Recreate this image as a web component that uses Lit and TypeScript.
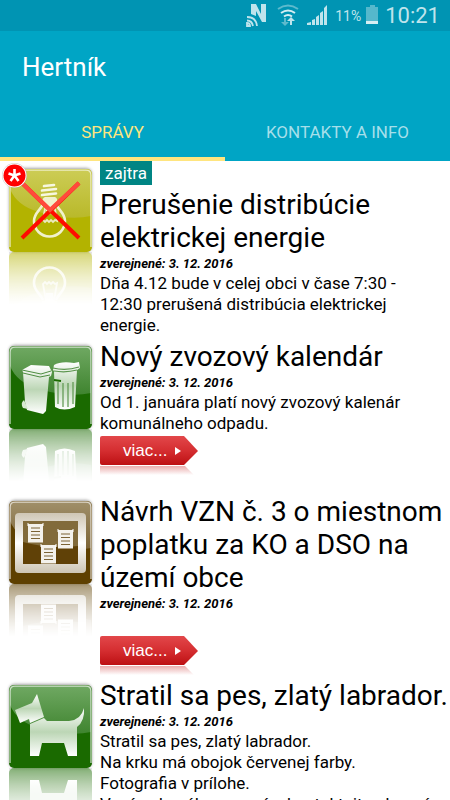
import { LitElement, html, svg, css, nothing } from "lit";
import { customElement, property, state } from "lit/decorators.js";

type Kind = "bulb" | "bins" | "board" | "dog";

interface Article {
  kind: Kind;
  title: string;
  text: string[];
  tag?: string;
  isNew?: boolean;
  more?: boolean;
}

const articles: Article[] = [
  {
    kind: "bulb",
    title: "Prerušenie distribúcie elektrickej energie",
    text: ["Dňa 4.12 bude v celej obci v čase 7:30 - 12:30 prerušená distribúcia elektrickej energie."],
    tag: "zajtra",
    isNew: true,
  },
  {
    kind: "bins",
    title: "Nový zvozový kalendár",
    text: ["Od 1. januára platí nový zvozový kalenár komunálneho odpadu."],
    more: true,
  },
  {
    kind: "board",
    title: "Návrh VZN č. 3 o miestnom poplatku za KO a DSO na území obce",
    text: ["\u00a0"],
    more: true,
  },
  {
    kind: "dog",
    title: "Stratil sa pes, zlatý labrador.",
    text: [
      "Stratil sa pes, zlatý labrador.",
      "Na krku má obojok červenej farby.",
      "Fotografia v prílohe.",
      "V prípade nálezu prosím kontaktujte obecný",
    ],
  },
];

const tones: Record<Kind, string[]> = {
  bulb: ["#cccc55", "#b3b300", "#b9b92a"],
  bins: ["#6fa862", "#1a6a00", "#3f842f"],
  board: ["#a08f69", "#5e4000", "#7b6335"],
  dog: ["#6fa862", "#1a6a00", "#3f842f"],
};

const note = (x: number, y: number) => svg`
  <path d="M${x} ${y}h15v18.500h-15z" fill="#f4f2ec"/>
  <path d="M${x} ${y - 1}v3M${x + 15} ${y - 1}v3" stroke="#fff"/>
  <path d="M${x + 3} ${y + 4}h9M${x + 3} ${y + 7.5}h9M${x + 3} ${y + 11}h9M${x + 3} ${y + 14.500}h9" stroke="#7b6335" stroke-width="1.200"/>`;

const glyphs: Record<Kind, unknown> = {
  bulb: svg`
    <path d="M34 35C31 42 25 44 25 52a15.500 15.500 0 0 0 31 0C56 44 50 42 47 35" fill="none" stroke="#f1f1cd" stroke-width="2.600"/>
    <path d="M33 34q0-5 3-6h10q3 1 2 6z" fill="#f1f1cd"/>
    <path d="M35 17l10-1M33 21.500l14-1.500M33 26l14-1.500" stroke="#f7f7e0" stroke-width="2.600" stroke-linecap="round"/>
    <path d="M37 34l-3 17 2 2 2-2 2 2 2-2 2 2 2-2 2 1-3-18" fill="none" stroke="#ecebc0" stroke-width="1.800"/>
    <path d="M36 34h9l-1 8h-7z" fill="#f1f1cd"/>`,
  bins: svg`
    <path d="M13 24l9-5 18 1 3 6-1 4-2 1-3 34-3 3-16-4-2-8-2-30z" fill="url(#metal)"/>
    <path d="M13 24l19 4 10-3M14 27l17 4 10-2" fill="none" stroke="#4d8c40"/>
    <path d="M15 54q-4 3-1 8l5 1z" fill="#d8e9d2"/>
    <path d="M45 19q7-4 20-2l5-1 1 6-3 2-2 37q-11 5-20 0l-1-36-1-1z" fill="url(#metal)"/>
    <path d="M44 22q13 3 26-1M45 25q12 2 23-1M49 36v22M54 37v24M59 37v24M64 36v22" fill="none" stroke="#5b954d" stroke-width="1.200"/>
    <path d="M45 34l7 1" stroke="#1a6a00" stroke-width="2"/>`,
  board: svg`
    <rect x="6" y="12" width="71" height="60" rx="4" fill="url(#frame)"/>
    <path d="M14 20h55v43h-55z" fill="#604107"/>
    <path d="M14 20h55v25q-30 3-55-4z" fill="#826b3b"/>
    ${note(19, 23)}${note(49, 29)}${note(32, 44)}`,
  dog: svg`
    <path d="M6 25l17-7 5-9 7 23-14 6-1-4-9 4z" fill="url(#metal)"/>
    <path d="M21 39l14-6 3 3h22q12-1 15-13 1 13-7 19v29h-9l-4-13H33l-3 13h-9z" fill="url(#metal)"/>`,
};

@customElement("news-icon")
class NewsIcon extends LitElement {
  @property() kind: Kind = "bulb";
  @property({ type: Boolean }) fresh = false;

  static styles = css`
    :host { display: block; }
    .picture { display: block; width: 100%; }
  `;

  render() {
    const [light, base, mid] = tones[this.kind];
    return html`<svg class="picture" viewBox="0 6 100 148" aria-hidden="true">
      <defs>
        <linearGradient id="gloss" x2="0" y2="1"><stop stop-color=${light}/><stop offset="1" stop-color=${mid}/></linearGradient>
        <linearGradient id="metal" x2="0" y2="1"><stop stop-color="#fff"/><stop offset=".5" stop-color="#bcd6b5"/><stop offset="1" stop-color="#fff"/></linearGradient>
        <linearGradient id="frame" x2="0" y2="1"><stop stop-color="#cfc6b4"/><stop offset=".5" stop-color="#fff"/><stop offset="1" stop-color="#cdc5b3"/></linearGradient>
        <linearGradient id="fade" gradientUnits="userSpaceOnUse" x1="0" y1="97" x2="0" y2="150"><stop stop-color="#fff" stop-opacity=".6"/><stop offset="1" stop-color="#fff" stop-opacity="0"/></linearGradient>
        <linearGradient id="sheen" x2="0" y2="1"><stop stop-color="#fff" stop-opacity=".1"/><stop offset="1" stop-color="#fff" stop-opacity=".6"/></linearGradient>
        <mask id="below"><rect y="97" width="100" height="53" fill="url(#fade)"/></mask>
        <filter id="soft" x="-.2" y="-.2" width="1.400" height="1.400"><feGaussianBlur stdDeviation="1.800"/></filter>
        <g id="tile">
          <rect width="83" height="83" rx="5" fill=${base}/>
          <path d="M1 5q0-4 4-4h73q4 0 4 4v42Q60 52 30 43Q8 37 1 20z" fill="url(#gloss)"/>
          ${glyphs[this.kind]}
        </g>
      </defs>
      <rect x="9" y="13" width="83" height="84" rx="6" fill="#666" opacity=".6" filter="url(#soft)"/>
      <use href="#tile" x="9" y="14"/>
      <path d="M10 92V20q0-5 5-5h71q5 0 5 5v72" fill="none" stroke="#fff" stroke-opacity=".65" stroke-width="1.500"/>
      <g mask="url(#below)">
        <rect x="9" y="97" width="83" height="8" fill="#666" opacity=".3"/>
        <use href="#tile" transform="translate(9 180) scale(1 -1)"/>
        <rect x="9" y="97" width="83" height="53" fill="url(#sheen)"/>
      </g>
      ${this.fresh
        ? svg`
          <path d="M22 28L79 83M79 28L22 83" stroke="#ff0c00" stroke-width="4"/>
          <path d="M22 28L50 55L79 28" fill="none" stroke="#ff4a3c" stroke-width="4"/>
          <circle cx="14.500" cy="20.500" r="12.500" fill="#999" opacity=".5"/>
          <circle cx="14.500" cy="20.500" r="12" fill="#fff"/>
          <circle cx="14.500" cy="20.500" r="11" fill="#f00"/>
          <path d="M14.500 14v6.500l6-2M14.500 20.500l4 5.500M14.500 20.500l-4 5.500M14.500 20.500l-6-2" fill="none" stroke="#fff" stroke-width="2.600"/>`
        : nothing}
    </svg>`;
  }
}

@customElement("news-item")
class NewsItem extends LitElement {
  @property({ attribute: false }) article!: Article;

  static styles = css`
    :host { display: grid; grid-template-columns: 100px 1fr; align-items: start; padding-bottom: 2px; }
    .icon { margin-bottom: 5px; }
    .body { min-width: 0; }
    .tag {
      display: table; padding: 0 5px; height: 24px; margin-bottom: 3px;
      background: #008584; color: #fff; font-size: 17px; line-height: 24px;
    }
    .title { margin: 0; font-size: 28px; line-height: 33px; font-weight: 400; }
    .top { padding-top: 2px; }
    .date { margin: 0; font-size: 13px; line-height: 19px; font-weight: 700; font-style: italic; }
    .text { margin: 0; padding-right: 10px; font-size: 17px; line-height: 21px; }
    .more { display: block; width: 100px; height: 41px; }
    .ribbon { display: block; }
    .label { font: 17px "Liberation Sans", Arial, sans-serif; fill: #fff; }
  `;

  render() {
    const a = this.article;
    return html`
      <news-icon class="icon" kind=${a.kind} ?fresh=${a.isNew}></news-icon>
      <div class="body ${a.tag ? "" : "top"}">
        ${a.tag ? html`<span class="tag">${a.tag}</span>` : nothing}
        <h2 class="title">${a.title}</h2>
        <p class="date">zverejnené: 3. 12. 2016</p>
        ${a.text.map((line) => html`<p class="text">${line}</p>`)}
        ${a.more
          ? html`<a class="more" href="#viac"><svg class="ribbon" width="100" height="41" viewBox="0 0 100 41">
              <defs>
                <linearGradient id="red" x2="0" y2="1"><stop stop-color="#e2474a"/><stop offset=".5" stop-color="#d52e31"/><stop offset="1" stop-color="#bd1013"/></linearGradient>
                <linearGradient id="shade" x2="0" y2="1"><stop stop-color="#c33" stop-opacity=".4"/><stop offset="1" stop-color="#c33" stop-opacity="0"/></linearGradient>
              </defs>
              <path d="M0 4q0-2 2-2h82l14 15-14 14H2q-2 0-2-2z" fill="url(#red)"/>
              <path d="M0 32h85l9 9H0z" fill="url(#shade)"/>
              <text class="label" x="23" y="22">viac...</text>
              <path d="M75 13l6 4-6 4z" fill="#fff"/>
            </svg></a>`
          : nothing}
      </div>`;
  }
}

@customElement("app-root")
class AppRoot extends LitElement {
  @state() private tab = 0;

  static styles = css`
    :host {
      display: flex; flex-direction: column; height: 100vh; overflow: hidden;
      background: #fff; color: #000; font-family: Roboto, "Noto Sans", sans-serif;
    }
    .status {
      flex: none; display: flex; justify-content: flex-end; align-items: center;
      height: 31px; padding-right: 10px; background: #0094b3; color: #bfe4ec;
    }
    .signals { display: block; }
    .percent { margin-left: 4px; width: 28px; font-size: 14px; }
    .clock { margin-left: 4px; font-size: 22px; line-height: 31px; }
    .bar { flex: none; background: #00a5c5; color: #fff; }
    .name { margin: 0; padding: 20px 22px 0; font-size: 26px; line-height: 32px; font-weight: 400; }
    .tabs { display: grid; grid-template-columns: 1fr 1fr; margin-top: 20px; }
    .tab {
      height: 58px; padding: 4px 0 0; border: 0; border-bottom: 4px solid transparent;
      background: none; color: #a6dfea; font: 17px/50px Roboto, sans-serif;
    }
    .active { color: #ffe57f; border-bottom-color: #ffe57f; }
    .list { flex: 1; min-height: 0; overflow: hidden; }
  `;

  render() {
    return html`
      <div class="status">
        <svg class="signals" width="90" height="31" viewBox="240 0 90 31" fill="#bfe4ec">
          <path d="M250 4h5l5 10V4h5v18h-4l-6-11v5l-5-2z"/>
          <path d="M246 26v-3q3 0 3 3zM246 20.500q5 0 6 5.500M246 17q9 0 10 9" fill="none" stroke="#bfe4ec" stroke-width="1.800"/>
          <path d="M277 9q10-7 20 0" fill="none" stroke="#5dbacd" stroke-width="2"/>
          <path d="M280 13q7-5 14 0M283 16.500q4-3 8 0" fill="none" stroke="#d5eef3" stroke-width="2"/>
          <path d="M283 18v4h-3l4 4 4-4h-3v-4z" fill="#5dbacd"/>
          <path d="M289 25v-4h-3l4-4 4 4h-3v4z"/>
          <path d="M306 25v-2l4-1v3zM311 25v-5l3-1v6zM315 25v-8l3-2v10zM319 25V13l3-2v14zM323 25V8l3-3v20z"/>
        </svg>
        <span class="percent">11%</span>
        <svg class="signals" width="18" height="31" viewBox="0 0 18 31">
          <path d="M3 7h4V5h5v2h3v14H3z" fill="#55b8cc"/><path d="M3 21h12v3H3z" fill="#d5eef3"/>
        </svg>
        <span class="clock">10:21</span>
      </div>
      <header class="bar">
        <h1 class="name">Hertník</h1>
        <nav class="tabs">
          ${["SPRÁVY", "KONTAKTY A INFO"].map(
            (label, i) => html`<button class="tab ${i === this.tab ? "active" : ""}" @click=${() => (this.tab = i)}>${label}</button>`
          )}
        </nav>
      </header>
      <main class="list">${articles.map((a) => html`<news-item .article=${a}></news-item>`)}</main>`;
  }
}
